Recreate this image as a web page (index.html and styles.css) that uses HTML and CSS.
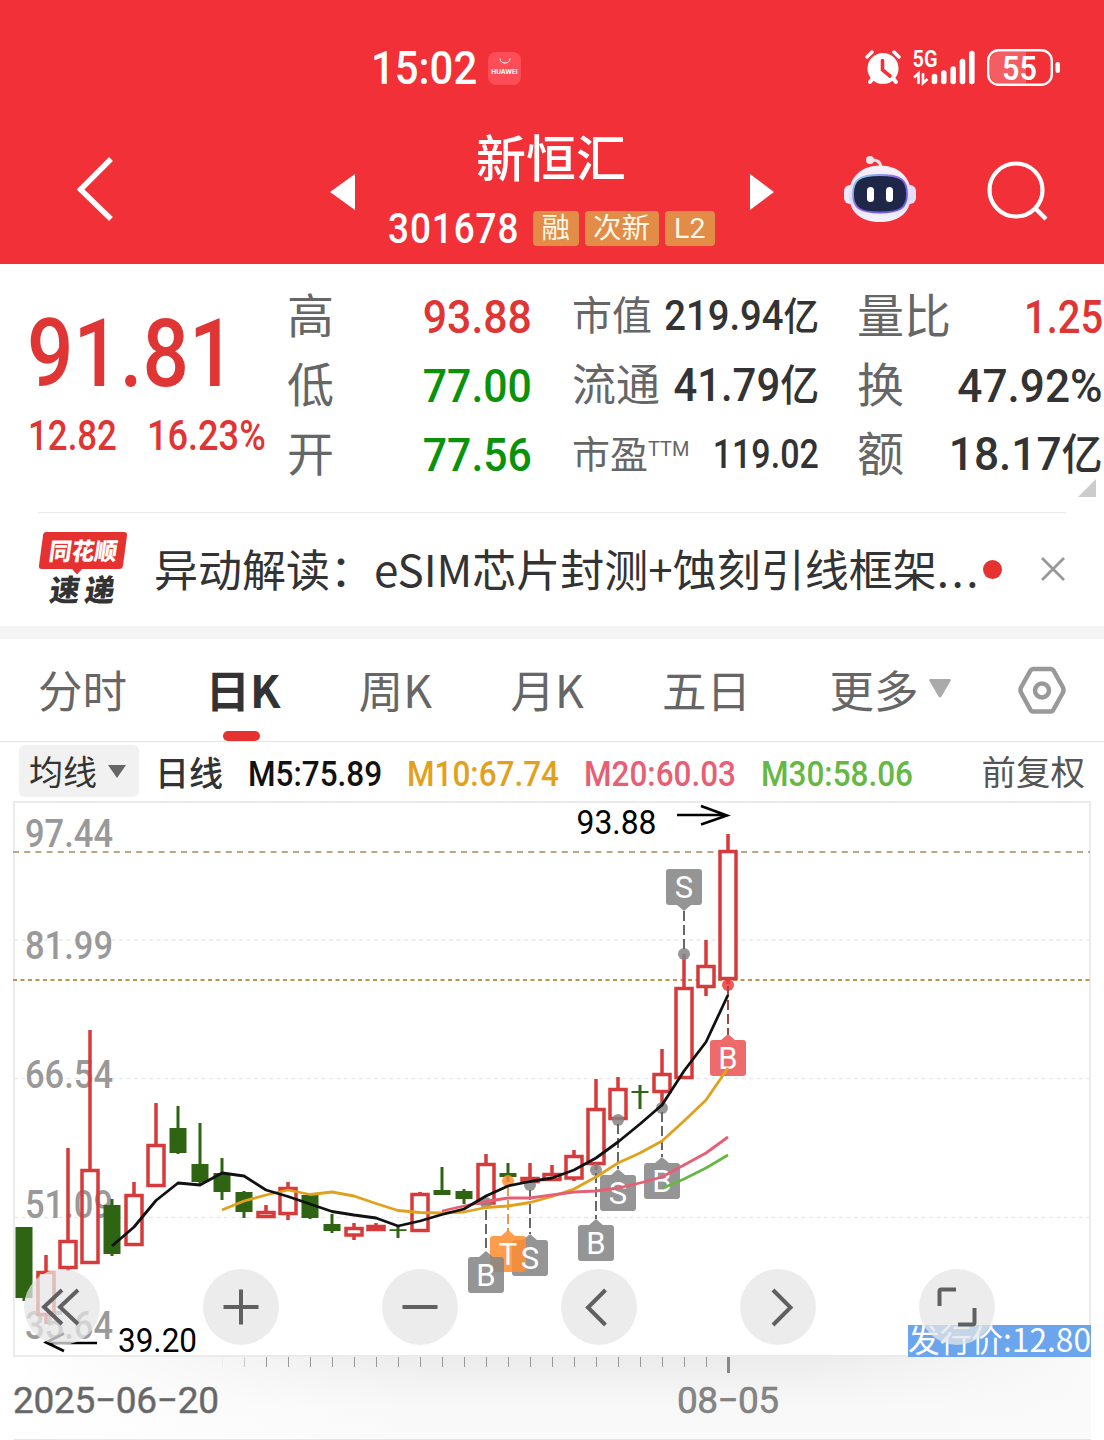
FILE: index.html
```html
<!DOCTYPE html>
<html lang="zh-CN">
<head>
    <meta charset="UTF-8">
    <meta name="viewport" content="width=device-width, initial-scale=1.0">
    <title>新恒汇 301678</title>
    <link rel="stylesheet" href="styles.css">
</head>
<body>
    <header class="header">
        <div class="status-bar">
            <span class="clock">15:02</span>
            <div class="app-badge">
                <svg width="12" height="6" viewBox="0 0 12 6"><path d="M1 0.5Q1.500 5 6 5T11 0.500" fill="none" stroke="#fff" stroke-width="1"/></svg>
                <span>HUAWEI</span>
            </div>
            <svg class="status-icons" width="196" height="56" viewBox="865 40 196 56">
                <g fill="none" stroke="#fff" stroke-linecap="round">
                    <path d="M867 57l5-5M899 57l-5-5" stroke-width="3.500"/>
                    <path d="M874 77l-4 5M892 77l4 5" stroke-width="4"/>
                </g>
                <circle cx="883" cy="68.500" r="15.500" fill="#fff"/>
                <path d="M882.500 60.500v9.500l7.500 6" fill="none" stroke="#f13037" stroke-width="3.600" stroke-linecap="round"/>
                <text class="net" x="912.500" y="67" textLength="25" lengthAdjust="spacingAndGlyphs">5G</text>
                <path d="M914 77.500l4.500-4v10.500M927.500 79l-4.500 4V73" fill="none" stroke="#fff" stroke-width="2.600"/>
                <g stroke="#fff" stroke-width="5.600" stroke-linecap="round">
                    <path d="M934.500 76.500v5M943.800 73v8.500M953.200 69v12.500M962.500 61.500v20M971.800 53.500v28"/>
                </g>
                <path d="M1026 51.500h-26a10.500 10.500 0 0 0-10.500 10.500v11a10.500 10.500 0 0 0 10.500 10.500h26z" fill="#fff" opacity=".22"/>
                <rect x="988.200" y="50.200" width="63.600" height="34.600" rx="10.500" fill="none" stroke="#fff" stroke-width="2.400"/>
                <rect x="1055.500" y="62" width="4.500" height="11" rx="2.200" fill="#fff"/>
                <text class="battery" x="1002" y="79.500" textLength="35" lengthAdjust="spacingAndGlyphs">55</text>
            </svg>
        </div>
        <div class="title-bar">
            <svg class="back" width="40" height="68" viewBox="0 0 40 68"><path d="M35 4L4.500 34.500L35 64" fill="none" stroke="#fff" stroke-width="5.400"/></svg>
            <svg class="prev" width="25" height="38" viewBox="0 0 25 38"><path d="M0 19L25 1v36z" fill="#fff"/></svg>
            <div class="stock">
                <h1>新恒汇</h1>
                <div class="stock-info">
                    <span class="code">301678</span>
                    <span class="tag">融</span>
                    <span class="tag">次新</span>
                    <span class="tag tag-l2">L2</span>
                </div>
            </div>
            <svg class="next" width="25" height="38" viewBox="0 0 25 38"><path d="M24 19L0 1v36z" fill="#fff"/></svg>
            <svg class="robot" width="72" height="68" viewBox="844 155 72 68">
                <defs>
                    <linearGradient id="shell" x1="0" y1="0" x2="0" y2="1">
                        <stop offset="0" stop-color="#fbf4fb"/>
                        <stop offset=".6" stop-color="#e0daf7"/>
                        <stop offset="1" stop-color="#f6f4ff"/>
                    </linearGradient>
                    <linearGradient id="rim" x1="0" y1="0" x2="1" y2="1">
                        <stop offset="0" stop-color="#8fe0f0"/>
                        <stop offset=".5" stop-color="#8a5be0"/>
                        <stop offset="1" stop-color="#5a63e8"/>
                    </linearGradient>
                </defs>
                <path d="M871 160q9-1 10 7" fill="none" stroke="#f5dfea" stroke-width="3"/>
                <circle cx="870" cy="160" r="4" fill="#fbe3ec"/>
                <rect x="844" y="185" width="14" height="19" rx="6" fill="#efe9fb"/>
                <rect x="902" y="185" width="14" height="19" rx="6" fill="#e4def6"/>
                <path d="M880 165.500c19 0 31 12 31 29s-11 27.500-31 27.500-31-10.500-31-27.500 12-29 31-29z" fill="url(#shell)"/>
                <path d="M880 175c21 0 27 5 27 19s-7 18.500-27 18.500-27-4.500-27-18.500 6-19 27-19z" fill="#1e2748" stroke="url(#rim)" stroke-width="1.800"/>
                <rect x="867" y="187" width="7" height="15" rx="3.500" fill="#fff"/>
                <rect x="886" y="187" width="7" height="15" rx="3.500" fill="#fff"/>
            </svg>
            <svg class="search" width="62" height="62" viewBox="0 0 62 62"><circle cx="29" cy="29" r="26.500" fill="none" stroke="#fff" stroke-width="4.200"/><path d="M48 47l11 11" stroke="#fff" stroke-width="4.500"/></svg>
        </div>
    </header>

    <section class="quote">
        <div class="price up">
            <div class="last"><span class="num">91.81</span></div>
            <div class="change"><span class="num">12.82</span><span class="num">16.23%</span></div>
        </div>
        <dl class="col col-1">
            <dt>高</dt><dd class="up num">93.88</dd>
            <dt>低</dt><dd class="down num">77.00</dd>
            <dt>开</dt><dd class="down num">77.56</dd>
        </dl>
        <dl class="col col-2">
            <dt class="s40">市值</dt><dd class="num s42">219.94<i>亿</i></dd>
            <dt class="s44">流通</dt><dd class="num s46">41.79<i>亿</i></dd>
            <dt class="s38">市盈<sup>TTM</sup></dt><dd class="num s40 narrow">119.02</dd>
        </dl>
        <dl class="col col-3">
            <dt>量比</dt><dd class="up num narrow">1.25</dd>
            <dt>换</dt><dd class="num wide">47.92%</dd>
            <dt>额</dt><dd class="num wide">18.17<i>亿</i></dd>
        </dl>
        <svg class="corner" width="18" height="18" viewBox="0 0 18 18"><path d="M18 0v18H0z" fill="#ccc"/></svg>
    </section>

    <section class="news">
        <svg class="news-logo" width="90" height="76" viewBox="38 532 90 76">
            <path d="M46 533h78q3.500 0 3 3.500l-4 30q-.5 3.500-4 3.500H82l-5 5.500-5-5.500H42q-3.500 0-3-3.500l4-30q.5-3.500 3-3.500z" fill="#e63131"/>
            <g transform="skewX(-8)">
                <text class="logo-top" x="127" y="561.500" textLength="68" lengthAdjust="spacingAndGlyphs">同花顺</text>
                <text class="logo-bottom" x="133" y="602" textLength="65">速递</text>
            </g>
        </svg>
        <p>异动解读：eSIM芯片封测+蚀刻引线框架<span class="ellipsis">...</span></p>
        <span class="dot"></span>
        <svg width="24" height="24" viewBox="0 0 24 24"><path d="M1 1l22 22M23 1L1 23" stroke="#999" stroke-width="2.800"/></svg>
    </section>

    <nav class="tabs">
        <a>分时</a>
        <a class="active">日K</a>
        <a>周K</a>
        <a>月K</a>
        <a>五日</a>
        <a class="more">更多<svg width="22" height="19" viewBox="0 0 22 19"><path d="M1.500 0h19q2 0 1 2L12.500 17.500q-1.500 2-3 0L.5 2q-1-2 1-2z" fill="#aaa"/></svg></a>
        <svg class="gear" width="48" height="48" viewBox="0 0 48 48"><g fill="none" stroke="#999" stroke-width="4.500" stroke-linejoin="round"><path d="M15 3h18q1.500 0 2.500 1.500l9.500 17q1 2.500 0 5l-9.500 17Q34.500 45.500 33 45.500H15q-1.500 0-2.500-1.500L3 26.500q-1-2.500 0-5l9.500-17Q13.500 3 15 3z"/><circle cx="24" cy="24.500" r="7"/></g></svg>
    </nav>

    <div class="ma-bar">
        <button class="ma-select"><span>均线</span><svg width="18" height="13" viewBox="0 0 18 13"><path d="M0 0h18L9 13z" fill="#666"/></svg></button>
        <span class="period">日线</span>
        <span class="ma ma5">M5:75.89</span>
        <span class="ma ma10">M10:67.74</span>
        <span class="ma ma20">M20:60.03</span>
        <span class="ma ma30">M30:58.06</span>
        <span class="adjust">前复权</span>
    </div>

    <main class="chart">
        <svg class="kline" width="1104" height="640" viewBox="0 800 1104 640">
            <defs>
                <linearGradient id="axisY" x1="0" y1="0" x2="0" y2="1">
                    <stop offset="0" stop-color="#ebebeb"/>
                    <stop offset=".6" stop-color="#f8f8f8"/>
                    <stop offset="1" stop-color="#fafafa"/>
                </linearGradient>
                <linearGradient id="fade" x1="0" y1="0" x2="1" y2="0">
                    <stop offset="0" stop-color="#fff"/>
                    <stop offset="1" stop-color="#fff" stop-opacity="0"/>
                </linearGradient>
                <linearGradient id="fadeRight" x1="0" y1="0" x2="1" y2="0">
                    <stop offset="0" stop-color="#fafafa" stop-opacity="0"/>
                    <stop offset="1" stop-color="#fafafa"/>
                </linearGradient>
            </defs>

            <!-- time axis -->
            <rect x="14" y="1355" width="1077" height="84" fill="url(#axisY)"/>
            <rect x="14" y="1357" width="420" height="82" fill="url(#fade)"/>
            <rect x="800" y="1357" width="291" height="82" fill="url(#fadeRight)"/>
            <path d="M14 1439.500h1077" stroke="#e6e6e6"/>
            <path d="M222.500 1357v10" stroke="#eee"/>
            <path d="M244.500 1357v10" stroke="#ccc"/>
            <path d="M266.500 1357v10M288.500 1357v10M310.500 1357v10M332.500 1357v10M354.500 1357v10M376.500 1357v10M398.500 1357v10M420.500 1357v10M442.500 1357v10M464.500 1357v10M486.500 1357v10M508.500 1357v10M530.500 1357v10M552.500 1357v10M574.500 1357v10M596.500 1357v10M618.500 1357v10M640.500 1357v10M662.500 1357v10M684.500 1357v10M706.500 1357v10" stroke="#999"/>
            <path d="M728.500 1357v16" stroke="#888" stroke-width="3"/>

            <!-- frame and grid -->
            <path d="M14 1356V802h1076v554z" fill="none" stroke="#ebebeb" stroke-width="2"/>
            <path d="M14 940h1076M14 1078.500h1076M14 1217.500h1076" stroke="#eaeaea" stroke-width="1.600" stroke-dasharray="4 3.500"/>
            <path d="M13 852h1077" stroke="#b9a77f" stroke-width="2" stroke-dasharray="6 5.200"/>
            <path d="M13 980h1077" stroke="#c1934f" stroke-width="2" stroke-dasharray="4 3.500"/>
            <path d="M82 1170h16v92H82z" fill="#fff"/>

            <!-- price labels -->
            <g class="scale">
                <text x="25" y="847" textLength="88" lengthAdjust="spacingAndGlyphs">97.44</text>
                <text x="25" y="959" textLength="88" lengthAdjust="spacingAndGlyphs">81.99</text>
                <text x="25" y="1088" textLength="88" lengthAdjust="spacingAndGlyphs">66.54</text>
                <text x="25" y="1218" textLength="88" lengthAdjust="spacingAndGlyphs">51.09</text>
                <text x="25" y="1339" textLength="88" lengthAdjust="spacingAndGlyphs">35.64</text>
            </g>

            <!-- falling days -->
            <g class="fall">
                <path d="M24 1298v3M112 1199v57M178 1106v48M200 1123v61M222 1158v42M244 1191v27M310 1195v24M332 1214v19M398 1226v12M442 1167v24M464 1189v15M508 1163v19M640 1085v24"/>
                <path class="body" d="M24 1227v71M112 1205v49M178 1128v25M200 1164v18M222 1173v19M244 1192v20M310 1195v23M332 1224v7M398 1229.200v1.800M442 1190v5M464 1191v8M508 1173v4M640 1091v2"/>
            </g>

            <!-- rising days -->
            <g class="rise">
                <path d="M46 1255v17M46 1316v8M68 1148v93M68 1269v2M90 1030v140M134 1182v13M156 1103v42M266 1205v7M288 1182v6M288 1215v5M354 1223v5M354 1236v4M376 1223v3M420 1192v2M486 1154v10M530 1163v16M552 1165v9M574 1150v6M574 1179v2M596 1079v30M596 1165v5M618 1077v12M662 1049v25M662 1093v14M684 954v34M706 940v26M706 988v8M728 834v17M728 980v4"/>
                <g class="box">
                    <rect class="open" x="38" y="1272.500" width="16" height="42"/>
                    <rect x="60" y="1241.500" width="16" height="26"/>
                    <rect class="open" x="82" y="1170.500" width="16" height="92"/>
                    <rect x="126" y="1195.500" width="16" height="49"/>
                    <rect x="148" y="1145.500" width="16" height="40"/>
                    <rect x="258" y="1212.500" width="16" height="4"/>
                    <rect x="280" y="1188.500" width="16" height="25"/>
                    <rect x="346" y="1228.500" width="16" height="6.500"/>
                    <rect x="368" y="1226.500" width="16" height="3"/>
                    <rect x="412" y="1194.500" width="16" height="36"/>
                    <rect x="478" y="1164.500" width="16" height="38.500"/>
                    <rect x="522" y="1178.500" width="16" height="3"/>
                    <rect x="544" y="1174.500" width="16" height="5"/>
                    <rect x="566" y="1156.500" width="16" height="21.500"/>
                    <rect x="588" y="1109.500" width="16" height="54"/>
                    <rect x="610" y="1089.500" width="16" height="29"/>
                    <rect x="654" y="1074.500" width="16" height="17"/>
                    <rect x="676" y="988.500" width="16" height="89"/>
                    <rect x="698" y="966.500" width="16" height="20"/>
                    <rect x="720" y="851.500" width="16" height="127"/>
                </g>
            </g>

            <!-- trade points -->
            <g class="points">
                <circle cx="684" cy="954" r="6"/>
                <circle cx="486" cy="1203" r="6"/>
                <circle cx="530" cy="1185" r="6"/>
                <circle cx="596" cy="1170" r="6"/>
                <circle cx="618" cy="1120" r="6"/>
                <circle cx="662" cy="1108" r="6"/>
                <circle class="t" cx="508" cy="1181" r="6"/>
                <circle class="b" cx="728" cy="985" r="6"/>
                <path d="M684 911v40M486 1210v42M530 1190v44M596 1173v46M618 1124v45M662 1112v45"/>
                <path class="t" d="M508 1186v46"/>
                <path class="b" d="M728 986v49"/>
            </g>
            <g class="marks">
                <path d="M669 869h30q3 0 3 3v30q0 3-3 3h-8l-7 6-7-6h-8q-3 0-3-3v-30q0-3 3-3z"/>
                <path d="M515 1240h8l7-6 7 6h8q3 0 3 3v30q0 3-3 3h-30q-3 0-3-3v-30q0-3 3-3z"/>
                <path class="t" d="M493 1236h8l7-6 7 6h8q3 0 3 3v30q0 3-3 3h-30q-3 0-3-3v-30q0-3 3-3z"/>
                <text x="684" y="898">S</text>
                <text x="530" y="1269">S</text>
                <text x="508" y="1265">T</text>
                <path d="M471 1257h8l7-6 7 6h8q3 0 3 3v30q0 3-3 3h-30q-3 0-3-3v-30q0-3 3-3z"/>
                <text x="486" y="1286">B</text>
                <path d="M581 1225h8l7-6 7 6h8q3 0 3 3v30q0 3-3 3h-30q-3 0-3-3v-30q0-3 3-3z"/>
                <text x="596" y="1254">B</text>
                <path d="M603 1175h8l7-6 7 6h8q3 0 3 3v30q0 3-3 3h-30q-3 0-3-3v-30q0-3 3-3z"/>
                <text x="618" y="1204">S</text>
                <path d="M647 1163h8l7-6 7 6h8q3 0 3 3v30q0 3-3 3h-30q-3 0-3-3v-30q0-3 3-3z"/>
                <text x="662" y="1192">B</text>
                <path class="b" d="M713 1040h8l7-6 7 6h8q3 0 3 3v30q0 3-3 3h-30q-3 0-3-3v-30q0-3 3-3z"/>
                <text x="728" y="1069">B</text>
            </g>

            <!-- moving averages -->
            <g class="averages">
                <path stroke="#66b845" d="M663 1188L684 1179L706 1168L728 1155"/>
                <path stroke="#e2a11c" d="M222 1210L244 1201L266 1195L288 1190L310 1194.500L332 1192L354 1196L376 1203.500L398 1210.500L420 1212.500L442 1213L464 1212L486 1207.500L508 1206L530 1202.500L552 1196.500L574 1189L596 1177L618 1163L640 1153L662 1141L684 1121L706 1100L728 1068"/>
                <path stroke="#e65f74" d="M442 1211L464 1206L486 1201.500L508 1198L530 1198L552 1195L574 1192L596 1191L618 1188L640 1183L662 1177L684 1165L706 1153L728 1137"/>
                <path stroke="#111" d="M112 1246L134 1227L156 1200.500L178 1183L200 1185L222 1173L244 1176L266 1190L288 1196.500L310 1204L332 1211.500L354 1215L376 1218L398 1226L420 1221L442 1214.500L464 1209L486 1196L508 1186L530 1181.500L552 1178L574 1170L596 1158L618 1142L640 1124L662 1105L684 1071L706 1042L728 995"/>
            </g>

            <!-- extremes -->
            <g class="extreme">
                <text x="576.500" y="834" textLength="80" lengthAdjust="spacingAndGlyphs">93.88</text>
                <text x="118" y="1352" textLength="79" lengthAdjust="spacingAndGlyphs">39.20</text>
                <path d="M677 815h49M701 806l26 9.500-26 9"/>
                <path d="M97 1343H48M64 1351l-18-8.500 18-9"/>
            </g>

            <rect x="908" y="1325" width="183" height="32" fill="#6aa5ee"/>
            <text class="issue" x="908" y="1352" textLength="183" lengthAdjust="spacingAndGlyphs">发行价:12.80</text>

            <g class="dates">
                <text x="13" y="1413" textLength="206">2025−06−20</text>
                <text x="677" y="1413" textLength="102" fill="#858585">08−05</text>
            </g>
        </svg>

        <div class="controls">
            <button><svg viewBox="0 0 76 76"><path d="M38 21L20 38l18 17M54 21L36 38l18 17"/></svg></button>
            <button><svg viewBox="0 0 76 76"><path d="M20.500 38h35M38 20.500v35"/></svg></button>
            <button><svg viewBox="0 0 76 76"><path d="M20.500 38h35"/></svg></button>
            <button><svg viewBox="0 0 76 76"><path d="M44.500 21L27 38.500l17.500 17.500"/></svg></button>
            <button><svg viewBox="0 0 76 76"><path d="M33 21l17.500 17.500L33 56"/></svg></button>
            <button><svg viewBox="0 0 76 76"><path d="M20.500 37V22.500q0-2 2-2H37M39 55.500h14.500q2 0 2-2V39"/></svg></button>
        </div>
    </main>
</body>
</html>
```
FILE: styles.css
```css
* {
    box-sizing: border-box;
    margin: 0;
    padding: 0;
}

body {
    width: 1104px;
    height: 1440px;
    overflow: hidden;
    background: #fff;
    color: #333;
    font-family: Roboto, 'Noto Sans CJK SC', sans-serif;
}

svg {
    display: block;
    flex: none;
}

button {
    border: none;
    font-family: inherit;
}

.up {
    color: #e03535;
}

.down {
    color: #0a930a;
}

/* header */
.header {
    height: 264px;
    background: #f13037;
    color: #fff;
}

.status-bar {
    display: flex;
    align-items: center;
    height: 136px;
    padding: 0 43px 0 371px;
}

.clock {
    width: 117px;
    font-size: 46px;
    font-weight: 500;
    transform: scaleX(0.91);
    transform-origin: left center;
}

.app-badge {
    display: flex;
    flex-direction: column;
    align-items: center;
    gap: 4px;
    width: 33px;
    height: 33px;
    padding-top: 6px;
    border-radius: 8px;
    background: #ff4d58;
    font: bold 6.5px/8px Inter, sans-serif;
}

.status-icons {
    margin-left: auto;
}

.net {
    font-size: 23px;
    font-weight: 600;
    fill: #fff;
}

.battery {
    font-size: 34px;
    font-weight: 600;
    fill: #fff;
}

.title-bar {
    display: flex;
    height: 128px;
    padding-left: 76px;
}

.back {
    margin-top: 19px;
}

.prev {
    margin: 37px 0 0 214px;
}

.stock {
    width: 395px;
    padding-left: 33px;
}

.stock h1 {
    font-size: 50px;
    font-weight: 500;
    line-height: 56px;
    margin-top: -4px;
    padding-left: 88px;
}

.stock-info {
    display: flex;
    align-items: center;
    gap: 6px;
    height: 36px;
    margin-top: 22px;
}

.code {
    width: 139px;
    font-size: 42px;
    font-weight: 500;
    letter-spacing: 1px;
    transform: scaleX(0.88);
    transform-origin: left center;
}

.tag {
    padding: 0 8.5px;
    border-radius: 4px;
    background: #e28c47;
    color: #fff8e8;
    font-size: 28.5px;
    line-height: 35px;
}

.tag-l2 {
    padding: 0 9.5px;
}

.next {
    margin-top: 37px;
}

.robot {
    margin: 19px 0 0 69px;
}

.search {
    margin: 25px 0 0 71px;
}

/* quote */
.quote {
    display: flex;
    position: relative;
    height: 248px;
    padding: 18px 1px 0 28px;
}

.num {
    display: inline-block;
    font-weight: 500;
    white-space: nowrap;
    transform: scaleX(0.91);
    transform-origin: right center;
}

.num.narrow {
    transform: scaleX(0.85);
}

.num.wide {
    transform: scaleX(0.94);
}

.num i {
    font-style: normal;
    font-size: 0.93em;
}

.price {
    width: 259px;
    padding-top: 14px;
}

.price .num {
    transform-origin: left center;
}

.last {
    height: 114px;
    margin-left: -1px;
    line-height: 116px;
    font-size: 95px;
}

.last .num {
    transform: scaleX(0.86);
}

.change {
    display: flex;
    gap: 12px;
    font-size: 42px;
    line-height: 52px;
}

.change .num {
    transform: scaleX(0.86);
}

.change .num:first-child {
    transform: scaleX(0.83);
}

.col {
    display: grid;
    grid-template-columns: auto auto;
    grid-auto-rows: 69px;
    justify-content: space-between;
    align-items: center;
    font-size: 47px;
}

.col dt {
    color: #666;
    line-height: 66px;
    white-space: nowrap;
}

.col dd {
    justify-self: end;
    line-height: 69px;
}

.col-1 {
    width: 245px;
}

.col-2 {
    width: 247px;
    margin-left: 40px;
    grid-template-columns: auto 0;
}

.col-3 {
    width: 246px;
    margin-left: 38px;
    grid-template-columns: auto 0;
}

.s38 { font-size: 38px; }
.s40 { font-size: 40px; }
.s42 { font-size: 42px; }
.s44 { font-size: 44px; }
.s46 { font-size: 46px; }

.col sup {
    font-size: 20px;
    vertical-align: 12px;
    line-height: 0;
}

.corner {
    position: absolute;
    right: 8px;
    bottom: 15px;
}

/* news */
.news {
    display: flex;
    align-items: center;
    height: 127px;
    padding: 0 39px 0 38px;
    border-bottom: 13px solid #f4f4f4;
    background: linear-gradient(#ebebeb, #ebebeb) 38px 0 / 1028px 1px no-repeat;
}

.news p {
    width: 829px;
    margin-left: 26px;
    padding-bottom: 3px;
    font-family: 'Noto Sans CJK SC', sans-serif;
    font-size: 44px;
    line-height: 60px;
    white-space: nowrap;
}

.ellipsis {
    letter-spacing: 2.5px;
}

.dot {
    width: 19px;
    height: 19px;
    margin-right: 39px;
    border-radius: 50%;
    background: #e63131;
}

.logo-top {
    font-size: 24px;
    font-weight: 900;
    fill: #fff;
}

.logo-bottom {
    font-size: 30px;
    font-weight: 900;
    fill: #333;
}

/* tabs */
.tabs {
    display: flex;
    align-items: center;
    justify-content: space-between;
    height: 103px;
    padding: 0 38px;
    border-bottom: 1px solid #e3e3e3;
    color: #666;
    font-family: 'Noto Sans CJK SC', sans-serif;
    font-size: 44.5px;
}

.tabs a {
    position: relative;
    padding-bottom: 3px;
    line-height: 99px;
}

.tabs .active {
    color: #333;
    font-weight: bold;
}

.active::after {
    content: '';
    position: absolute;
    left: 18px;
    bottom: 0;
    width: 37px;
    height: 10px;
    border-radius: 5px;
    background: #e63131;
}

.more {
    display: flex;
    align-items: center;
    gap: 10px;
}

.gear {
    margin-left: -11px;
}

/* moving average legend */
.ma-bar {
    display: flex;
    align-items: center;
    height: 58px;
    padding: 0 19px;
    font-size: 34px;
}

.ma-select {
    display: flex;
    align-items: center;
    gap: 11px;
    width: 120px;
    height: 52px;
    margin-right: 16px;
    padding-left: 10px;
    border-radius: 6px;
    background: #f1f1f1;
    color: #333;
    font-size: 34px;
}

.ma-select span,
.adjust {
    padding-bottom: 2px;
}

.period {
    width: 93px;
    font-weight: 500;
}

.ma {
    width: 177px;
    padding-top: 6px;
    font-size: 35px;
    font-weight: 500;
    transform: scaleX(0.9);
    transform-origin: left center;
}

.ma5 { width: 159px; color: #111; }
.ma10 { color: #e2a11c; }
.ma20 { color: #e65f74; }
.ma30 { color: #66b845; }

.adjust {
    margin-left: auto;
    color: #555;
    font-size: 34.5px;
}

/* chart */
.chart {
    position: relative;
    height: 640px;
}

.scale {
    font-size: 38px;
    font-weight: 500;
    fill: #999;
}

.fall path {
    stroke: #2f6412;
    stroke-width: 3;
}

.fall .body {
    stroke-width: 17;
}

.rise path,
.box rect {
    fill: none;
    stroke: #d63a3a;
    stroke-width: 3.5;
}

.box rect {
    fill: #fff;
}

.box .open {
    fill: none;
}

.points circle {
    fill: #858585;
    fill-opacity: 0.85;
}

.points circle.t,
.marks path.t {
    fill: #ff8f33;
}

.points circle.b {
    fill: #f03a3a;
}

.points path {
    fill: none;
    stroke: #666;
    stroke-width: 2;
    stroke-dasharray: 10 4;
}

.points path.t {
    stroke: #f0954a;
}

.points path.b {
    stroke: #a84242;
}

.marks {
    font-size: 31px;
    text-anchor: middle;
}

.marks path {
    fill: #858585;
    fill-opacity: 0.87;
}

.marks path.t {
    fill: #ff8f33;
}

.marks path.b {
    fill: #ec5555;
}

.marks text {
    fill: #fff;
}

.averages path {
    fill: none;
    stroke-width: 2.8;
    stroke-linejoin: round;
}

.extreme {
    font-size: 34px;
    fill: #000;
}

.extreme path {
    fill: none;
    stroke: #000;
    stroke-width: 2.6;
}

.issue {
    font-family: 'Noto Sans CJK SC', sans-serif;
    font-size: 32px;
    fill: #fff;
}

.dates {
    font-size: 37px;
    fill: #666;
    stroke: #777;
    stroke-width: 0.5;
}

.controls {
    display: flex;
    gap: 103px;
    position: absolute;
    left: 24px;
    top: 469px;
}

.controls button {
    width: 76px;
    height: 76px;
    border-radius: 50%;
    background: rgba(230, 230, 230, 0.75);
}

.controls path {
    fill: none;
    stroke: #606060;
    stroke-width: 4;
}
```
